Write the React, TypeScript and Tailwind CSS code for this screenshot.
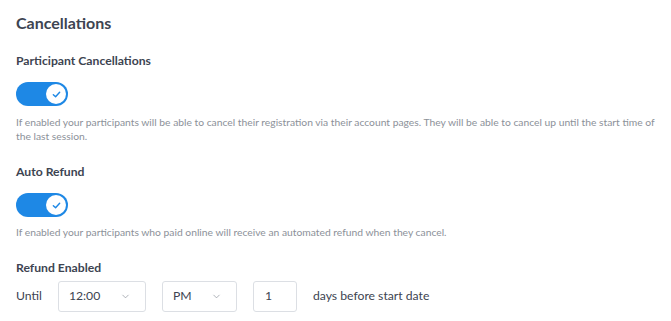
import { ChevronDown } from "lucide-react";

function Toggle() {
  return (
    <div className="flex h-6 w-[52px] items-center justify-end rounded-full bg-[#1e88e5] pr-[2px]">
      <div className="flex h-5 w-5 items-center justify-center rounded-full bg-white">
        <svg width="9" height="9" viewBox="0 0 10 10" fill="none">
          <path d="M1.5 5.2 L4 7.5 L8.5 2.5" stroke="#1e88e5" strokeWidth="1.6" strokeLinecap="round" strokeLinejoin="round" />
        </svg>
      </div>
    </div>
  );
}

function Select({ value, width }: { value: string; width: string }) {
  return (
    <div className={`flex h-[31px] ${width} items-center justify-between rounded-[3px] border border-[#dcdfe4] bg-white pl-[10px] pr-[14px] text-[12.2px] text-[#3d4451]`}>
      <span>{value}</span>
      <ChevronDown size={11} strokeWidth={1.5} className="text-[#8a9099]" />
    </div>
  );
}

export default function App() {
  return (
    <div className="min-h-screen bg-white px-4 pt-[11px] font-['Lato',sans-serif] text-[#3d4451]">
      <h2 className="text-[16px] font-bold leading-6">Cancellations</h2>

      <h3 className="mt-[17px] text-[12.2px] font-bold leading-[18px]">Participant Cancellations</h3>
      <div className="mt-3">
        <Toggle />
      </div>
      <p className="mt-[9px] text-[10.3px] leading-[14px] text-[#8c9199]">
        If enabled your participants will be able to cancel their registration via their account pages. They will be able to cancel up until the start time of the last session.
      </p>

      <h3 className="mt-5 text-[12.2px] font-bold leading-[18px]">Auto Refund</h3>
      <div className="mt-3">
        <Toggle />
      </div>
      <p className="mt-2 text-[10.3px] leading-[14px] text-[#8c9199]">
        If enabled your participants who paid online will receive an automated refund when they cancel.
      </p>

      <h3 className="mt-5 text-[12.2px] font-bold leading-[18px]">Refund Enabled</h3>
      <div className="mt-1 flex items-center gap-4 text-[12.2px]">
        <span>Until</span>
        <Select value="12:00" width="w-[88px]" />
        <Select value="PM" width="w-[75px]" />
        <div className="flex h-[31px] w-[44px] items-center rounded-[3px] border border-[#dcdfe4] pl-[11px]">1</div>
        <span>days before start date</span>
      </div>
    </div>
  );
}
